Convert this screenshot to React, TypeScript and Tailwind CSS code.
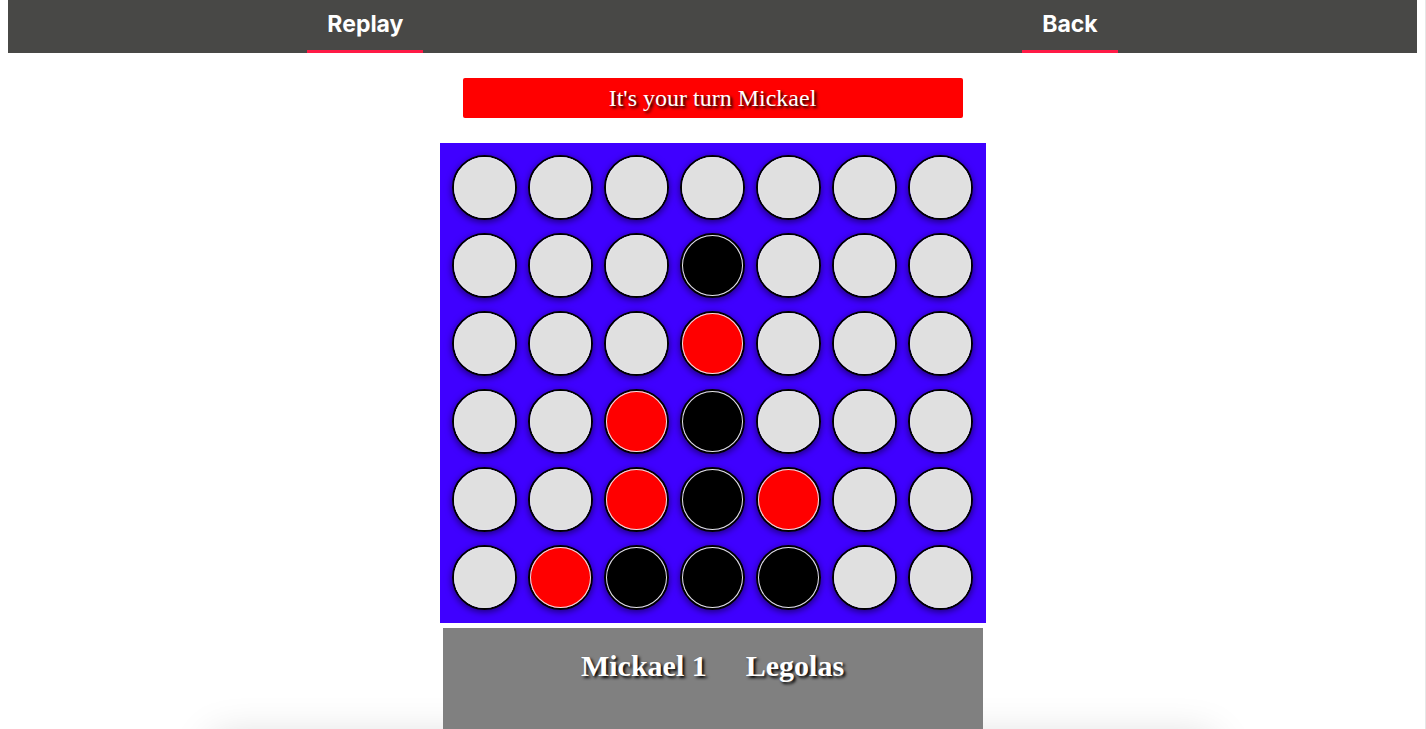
import React from "react";

type Cell = "" | "r" | "b";

// board rows, top to bottom
const BOARD: Cell[][] = [
  ["", "", "", "", "", "", ""],
  ["", "", "", "b", "", "", ""],
  ["", "", "", "r", "", "", ""],
  ["", "", "r", "b", "", "", ""],
  ["", "", "r", "b", "r", "", ""],
  ["", "r", "b", "b", "b", "", ""],
];

const Disc = ({ value }: { value: Cell }) => {
  const fill = value === "r" ? "bg-[#ff0000]" : value === "b" ? "bg-black" : "bg-[#e0e0e0]";
  return (
    <div className="w-[65px] h-[65px] rounded-full border-2 border-black shadow-[0_2px_7px_rgba(0,0,0,0.55)]">
      <div className={`w-full h-full rounded-full ${fill} shadow-[inset_0_0_0_1px_#e6e6e6]`}></div>
    </div>
  );
};

export default function App() {
  return (
    <div className="flex min-h-screen bg-white overflow-hidden">
      <div className="flex-1 px-2 flex flex-col items-center">
        {/* Top nav */}
        <nav className="w-full h-[53px] bg-[#484846] flex justify-around">
          <a className="px-5 h-full pb-[2px] flex items-center border-b-[3px] border-[#ff1a46] text-white font-bold text-[23px] font-['Inter',sans-serif] cursor-pointer">
            Replay
          </a>
          <a className="px-5 h-full pb-[2px] flex items-center border-b-[3px] border-[#ff1a46] text-white font-bold text-[23px] font-['Inter',sans-serif] cursor-pointer">
            Back
          </a>
        </nav>

        {/* Turn banner */}
        <div className="mt-[25px] w-[500px] h-[40px] rounded-[2px] bg-[#ff0000] flex items-center justify-center text-white text-[24px] font-['Liberation_Serif',serif] [text-shadow:2px_2px_3px_#000]">
          It's your turn Mickael
        </div>

        {/* Board */}
        <div className="mt-[25px] w-[546px] h-[480px] bg-[#3f00ff] pt-[12px] pl-[12px] grid grid-cols-[repeat(7,65px)] grid-rows-[repeat(6,65px)] gap-x-[11px] gap-y-[13px]">
          {BOARD.map((row, r) => row.map((c, i) => <Disc key={`${r}-${i}`} value={c} />))}
        </div>

        {/* Scores */}
        <div className="relative z-10 mt-[5px] w-[540px] h-[110px] bg-[#808080] pt-[20px] flex justify-center gap-[39px] text-white font-bold text-[30px] leading-[36px] font-['Liberation_Serif',serif] [text-shadow:2px_2px_3px_#000]">
          <span>Mickael 1</span>
          <span>Legolas</span>
        </div>
        <div className="w-[1000px] h-40 shrink-0 shadow-[0_0_40px_rgba(0,0,0,0.16)]"></div>
      </div>
      <div className="w-px bg-[#e6e6e6]"></div>
    </div>
  );
}
